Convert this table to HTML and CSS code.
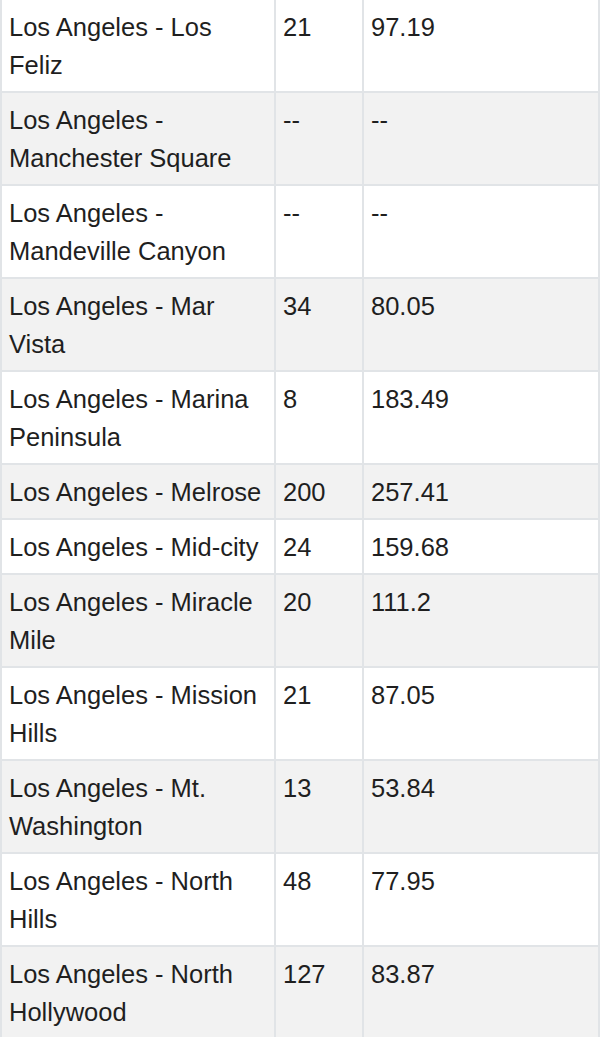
FILE: index.html
```html
<!DOCTYPE html>
<html>
  <head>
    <meta charset="UTF-8" />
    <title>Neighborhoods</title>
    <link rel="stylesheet" href="styles.css">
  </head>
  <body>
    <table class="data-table">
      <colgroup>
        <col class="col-name" />
        <col class="col-count" />
        <col class="col-value" />
      </colgroup>
      <tbody>
        <tr><td>Los Angeles - Los Feliz</td><td>21</td><td>97.19</td></tr>
        <tr><td>Los Angeles - Manchester Square</td><td>--</td><td>--</td></tr>
        <tr><td>Los Angeles - Mandeville Canyon</td><td>--</td><td>--</td></tr>
        <tr><td>Los Angeles - Mar Vista</td><td>34</td><td>80.05</td></tr>
        <tr><td>Los Angeles - Marina Peninsula</td><td>8</td><td>183.49</td></tr>
        <tr><td>Los Angeles - Melrose</td><td>200</td><td>257.41</td></tr>
        <tr><td>Los Angeles - Mid-city</td><td>24</td><td>159.68</td></tr>
        <tr><td>Los Angeles - Miracle Mile</td><td>20</td><td>111.2</td></tr>
        <tr><td>Los Angeles - Mission Hills</td><td>21</td><td>87.05</td></tr>
        <tr><td>Los Angeles - Mt. Washington</td><td>13</td><td>53.84</td></tr>
        <tr><td>Los Angeles - North Hills</td><td>48</td><td>77.95</td></tr>
        <tr><td>Los Angeles - North Hollywood</td><td>127</td><td>83.87</td></tr>
      </tbody>
    </table>
  </body>
</html>
```
FILE: styles.css
```css
body {
  margin: 0;
  background: #fff;
  font-family: "Liberation Sans", Arial, sans-serif;
  color: #1f1f1f;
}
.data-table {
  width: 600px;
  margin-top: -2px;
  border-collapse: collapse;
  table-layout: fixed;
  font-size: 25.5px;
  line-height: 38px;
}
.col-name {
  width: 274px;
}
.col-count {
  width: 88px;
}
.data-table td {
  border: 2px solid #e1e4e7;
  padding: 8px 7px 7px;
  vertical-align: top;
}
.data-table tr:nth-child(even) td {
  background-color: #f2f2f2;
}
```
